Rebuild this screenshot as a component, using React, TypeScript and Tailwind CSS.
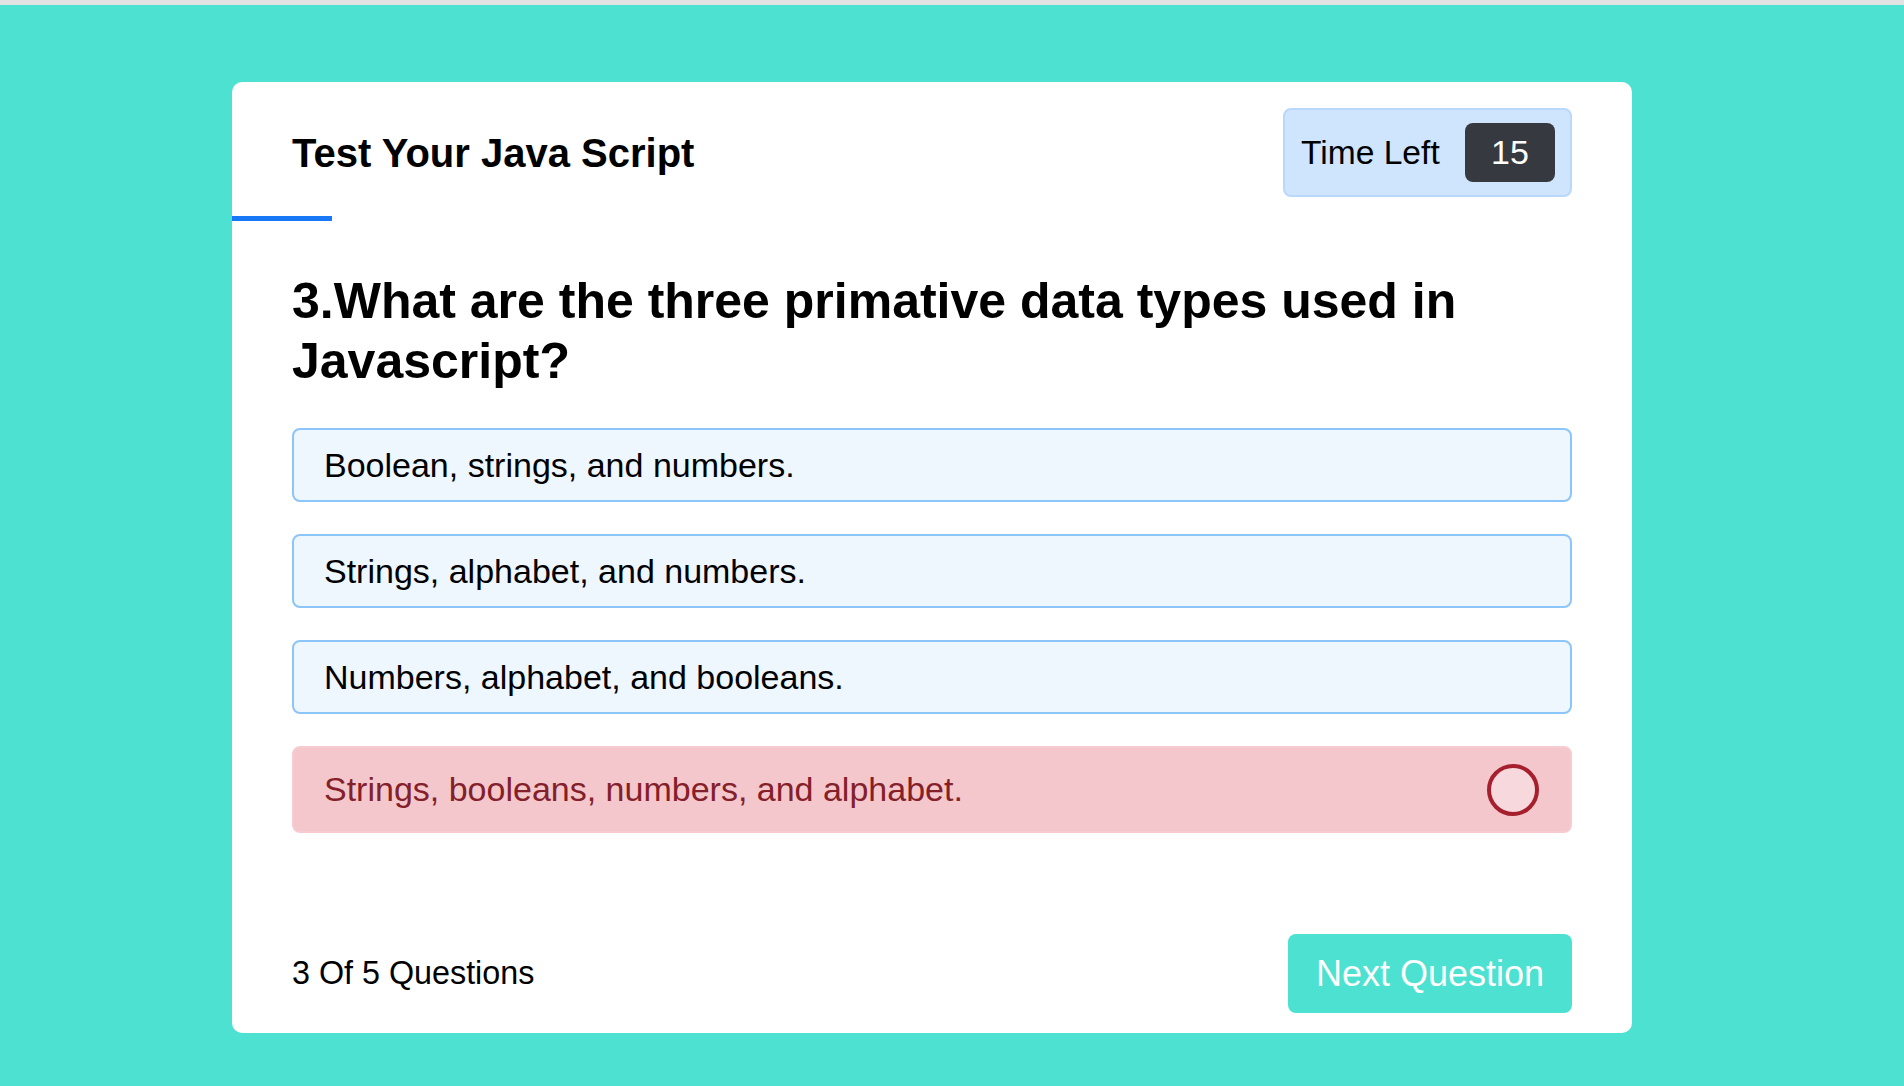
const options = [
  { text: 'Boolean, strings, and numbers.', wrong: false },
  { text: 'Strings, alphabet, and numbers.', wrong: false },
  { text: 'Numbers, alphabet, and booleans.', wrong: false },
  { text: 'Strings, booleans, numbers, and alphabet.', wrong: true },
];

export default function App() {
  return (
    <div className="min-h-[1086px] bg-[#4ce1d0] font-['Liberation_Sans',Arial,sans-serif]">
      <div className="h-[5px] bg-[#e2e2e2]" />

      <div className="pt-[77px] pb-[53px]">
        <div className="ml-[232px] w-[1400px] bg-white rounded-[10px]">
          {/* Header */}
          <div className="flex items-center justify-between px-[60px] pt-[26px]">
            <h3 className="text-[40px] font-bold text-black leading-[48px]">
              Test Your Java Script
            </h3>
            <div className="flex items-center h-[89px] w-[289px] pl-[16px] pr-[15px] justify-between bg-[#cfe4fd] border-2 border-[#b9d8fc] rounded-[8px]">
              <span className="text-[33.6px] leading-[40px] text-black">Time Left</span>
              <span className="flex items-center justify-center w-[90px] h-[59px] rounded-[8px] bg-[#363a40] text-white text-[34px]">
                15
              </span>
            </div>
          </div>
          <div className="mt-[19px] w-[100px] h-[5px] bg-[#1878f6]" />

          {/* Question */}
          <div className="px-[60px] pt-[50px]">
            <h2 className="text-[50px] font-bold leading-[60px] text-black">
              3.What are the three primative data types used in Javascript?
            </h2>

            <div className="mt-[37px] flex flex-col gap-[32px]">
              {options.map((option, index) =>
                option.wrong ? (
                  <div
                    key={index}
                    className="flex items-center justify-between h-[87px] pl-[30px] pr-[31px] rounded-[8px] border-2 border-[#f6ccd0] bg-[#f4c7cc]"
                  >
                    <span className="text-[34px] text-[#842029]">{option.text}</span>
                    <span className="w-[52px] h-[52px] rounded-full border-[4px] border-[#a51f2f] bg-[#f7d8dc]" />
                  </div>
                ) : (
                  <div
                    key={index}
                    className="flex items-center h-[74px] pl-[30px] rounded-[8px] border-2 border-[#8cc5f9] bg-[#eef6fe]"
                  >
                    <span className="text-[34px] text-black">{option.text}</span>
                  </div>
                )
              )}
            </div>

            {/* Footer */}
            <div className="mt-[101px] pb-[20px] flex items-center justify-between">
              <span className="text-[32.3px] text-black">3 Of 5 Questions</span>
              <button className="w-[284px] h-[79px] rounded-[8px] bg-[#4ce1d0] text-white text-[36px]">
                Next Question
              </button>
            </div>
          </div>
        </div>
      </div>
    </div>
  );
}
